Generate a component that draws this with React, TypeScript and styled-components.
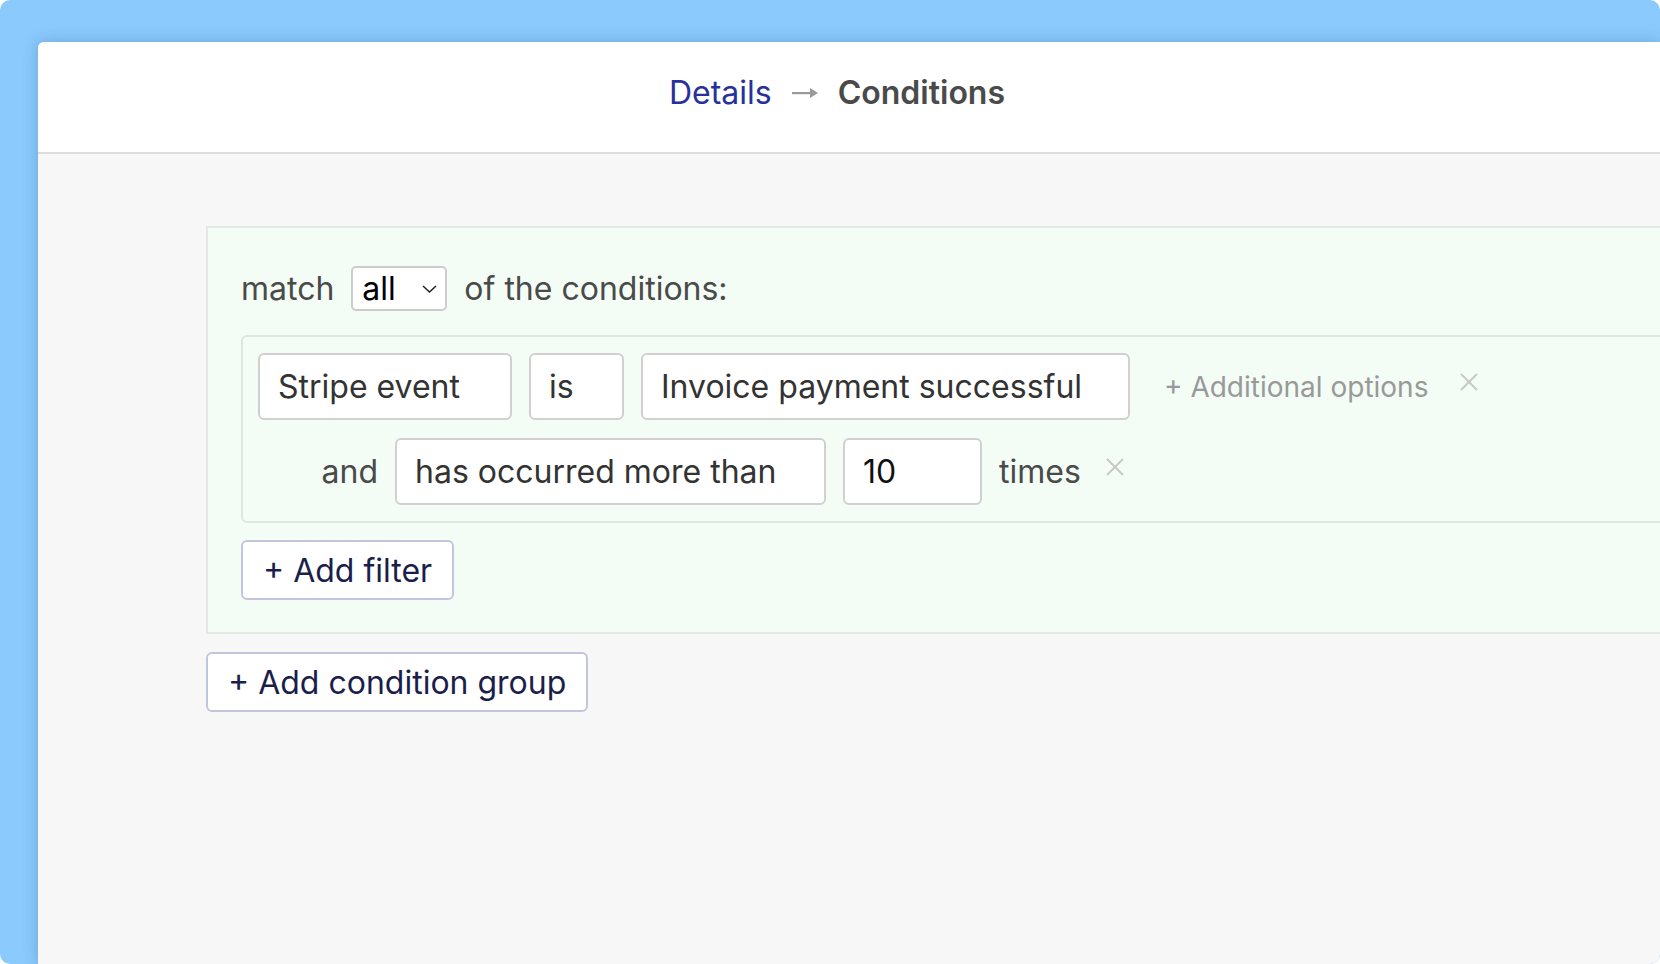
import React from "react";
import styled, { createGlobalStyle } from "styled-components";

const GlobalStyle = createGlobalStyle`
  html, body {
    margin: 0;
    padding: 0;
    background: #ffffff;
  }
  body {
    font-family: Inter, "Noto Sans", "Liberation Sans", sans-serif;
  }
  * { box-sizing: border-box; }
`;

const Frame = styled.div`
  width: 1660px;
  height: 964px;
  background: #8acafd;
  border-radius: 10px;
  overflow: hidden;
  display: flex;
  flex-direction: column;
  padding: 42px 0 0 38px;
`;

const Window = styled.div`
  flex: 1;
  display: flex;
  flex-direction: column;
  background: #f7f7f7;
  border-top-left-radius: 6px;
  box-shadow: 0 0 16px rgba(10, 40, 80, 0.22);
  min-width: 0;
`;

const Header = styled.header`
  height: 112px;
  flex: none;
  background: #ffffff;
  border-bottom: 2px solid #dcdcdc;
  border-top-left-radius: 6px;
  display: flex;
  align-items: center;
  justify-content: center;
  gap: 20px;
  padding: 0 24px 8px 0;
  font-size: 32px;
`;

const Crumb = styled.span<{ $active?: boolean }>`
  color: ${(p) => (p.$active ? "#4a4a4a" : "#27319a")};
  font-weight: ${(p) => (p.$active ? 600 : 400)};
  line-height: 1.21;
`;

const Content = styled.main`
  flex: 1;
  padding: 72px 0 0 168px;
  display: flex;
  flex-direction: column;
  align-items: flex-start;
  gap: 18px;
`;

const Panel = styled.section`
  width: 1520px;
  background: #f3fdf5;
  border: 2px solid #e4e8e5;
  padding: 38px 0 32px 33px;
  display: flex;
  flex-direction: column;
  align-items: flex-start;
`;

const MatchRow = styled.div`
  display: flex;
  align-items: center;
  gap: 17px;
  height: 45px;
  font-size: 32px;
  color: #4a4a4a;
`;

const Select = styled.div`
  width: 96px;
  height: 45px;
  background: #ffffff;
  border: 2px solid #cccccc;
  border-radius: 5px;
  display: flex;
  align-items: center;
  justify-content: space-between;
  padding: 0 8px 0 9px;
  color: #000000;
  font-size: 32px;
`;

const GroupBox = styled.div`
  align-self: stretch;
  margin-top: 24px;
  border: 2px solid #dfe5e0;
  border-radius: 6px;
  padding: 16px 15px 16px;
  display: flex;
  flex-direction: column;
  gap: 18px;
`;

const FilterRow = styled.div`
  display: flex;
  align-items: center;
  gap: 17px;
  font-size: 32px;
`;

const Field = styled.div<{ $w: number; $dark?: boolean }>`
  width: ${(p) => p.$w}px;
  height: 67px;
  flex: none;
  background: #ffffff;
  border: 2px solid #d0d0d0;
  border-radius: 6px;
  display: flex;
  align-items: center;
  padding: 0 18px;
  color: ${(p) => (p.$dark ? "#111111" : "#333333")};
  white-space: nowrap;
`;

const Label = styled.span<{ $w?: number }>`
  color: #4a4a4a;
  white-space: nowrap;
  ${(p) => (p.$w ? `width: ${p.$w}px; text-align: right; flex: none;` : "")}
`;

const OptionsLink = styled.span`
  color: #999999;
  font-size: 28px;
  margin-left: 17px;
  white-space: nowrap;
`;

const RemoveButton = styled.span<{ $ml: number }>`
  display: flex;
  margin-left: ${(p) => p.$ml}px;
  margin-bottom: 9px;
  color: #c8c8c8;
`;

const ActionButton = styled.button<{ $mt?: number }>`
  height: 60px;
  margin-top: ${(p) => p.$mt ?? 0}px;
  background: #ffffff;
  border: 2px solid #c3c5dd;
  border-radius: 6px;
  padding: 0 20px;
  font-family: inherit;
  font-size: 32px;
  color: #1b1e4b;
  display: inline-flex;
  align-items: center;
  cursor: pointer;
`;

const Arrow = () => (
  <svg width="26" height="10" viewBox="0 0 26 10" aria-hidden="true">
    <rect x="0" y="4" width="19" height="2.2" fill="#9a9a9a" />
    <polygon points="18,0 26,5 18,10" fill="#9a9a9a" />
  </svg>
);

const Chevron = () => (
  <svg width="15" height="8" viewBox="0 0 15 8" aria-hidden="true">
    <polyline points="1,1 7.5,7 14,1" fill="none" stroke="#222" strokeWidth="1.5" />
  </svg>
);

const XIcon = () => (
  <svg width="20" height="20" viewBox="0 0 20 20" aria-hidden="true">
    <line x1="2" y1="2" x2="18" y2="18" stroke="currentColor" strokeWidth="2" />
    <line x1="18" y1="2" x2="2" y2="18" stroke="currentColor" strokeWidth="2" />
  </svg>
);

export default function App() {
  return (
    <>
      <GlobalStyle />
      <Frame>
        <Window>
          <Header>
            <Crumb>Details</Crumb>
            <Arrow />
            <Crumb $active>Conditions</Crumb>
          </Header>
          <Content>
            <Panel>
              <MatchRow>
                <span>match</span>
                <Select>
                  <span>all</span>
                  <Chevron />
                </Select>
                <span>of the conditions:</span>
              </MatchRow>
              <GroupBox>
                <FilterRow>
                  <Field $w={254}>Stripe event</Field>
                  <Field $w={95}>is</Field>
                  <Field $w={489}>Invoice payment successful</Field>
                  <OptionsLink>+ Additional options</OptionsLink>
                  <RemoveButton $ml={14}>
                    <XIcon />
                  </RemoveButton>
                </FilterRow>
                <FilterRow>
                  <Label $w={120}>and</Label>
                  <Field $w={431}>has occurred more than</Field>
                  <Field $w={139} $dark>10</Field>
                  <Label>times</Label>
                  <RemoveButton $ml={7}>
                    <XIcon />
                  </RemoveButton>
                </FilterRow>
              </GroupBox>
              <ActionButton $mt={17}>+ Add filter</ActionButton>
            </Panel>
            <ActionButton>+ Add condition group</ActionButton>
          </Content>
        </Window>
      </Frame>
    </>
  );
}
